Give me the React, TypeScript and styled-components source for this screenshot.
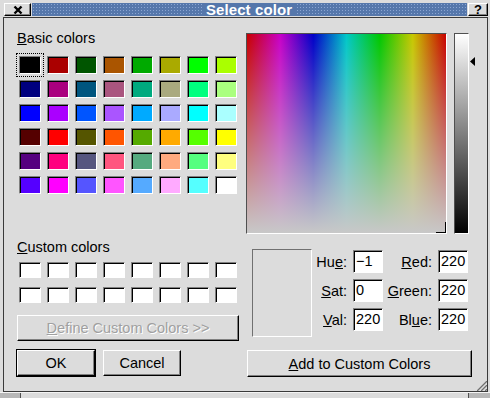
import React from 'react'
import styled, { createGlobalStyle, css } from 'styled-components'

const GlobalStyle = createGlobalStyle`
  html, body {
    margin: 0;
    padding: 0;
    background: #dcdcdc;
  }
  body {
    font-family: "Liberation Sans", Arial, sans-serif;
    font-size: 14.5px;
    color: #000;
  }
`

// Qt basic palette, row by row
const BASIC = [
  ['#000000', '#aa0000', '#005500', '#aa5500', '#00aa00', '#aaaa00', '#00ff00', '#aaff00'],
  ['#00007f', '#aa007f', '#00557f', '#aa557f', '#00aa7f', '#aaaa7f', '#00ff7f', '#aaff7f'],
  ['#0000ff', '#aa00ff', '#0055ff', '#aa55ff', '#00aaff', '#aaaaff', '#00ffff', '#aaffff'],
  ['#550000', '#ff0000', '#555500', '#ff5500', '#55aa00', '#ffaa00', '#55ff00', '#ffff00'],
  ['#55007f', '#ff007f', '#55557f', '#ff557f', '#55aa7f', '#ffaa7f', '#55ff7f', '#ffff7f'],
  ['#5500ff', '#ff00ff', '#5555ff', '#ff55ff', '#55aaff', '#ffaaff', '#55ffff', '#ffffff'],
]

const CUSTOM = Array.from({ length: 16 }, () => '#ffffff')

const sunken = css`
  box-sizing: border-box;
  border: 1px solid;
  border-color: #808080 #ffffff #ffffff #808080;
  box-shadow: inset 1px 1px 0 #000;
`

const raised = css`
  box-sizing: border-box;
  border: 1px solid;
  border-color: #ffffff #000 #000 #ffffff;
  box-shadow: inset -1px -1px 0 #808080;
  background: #dcdcdc;
`

const Window = styled.div`
  width: 490px;
  height: 398px;
  background: #dcdcdc;
  display: flex;
  flex-direction: column;
  overflow: hidden;
`

const TitleBar = styled.div`
  height: 17px;
  box-sizing: border-box;
  padding: 3px 2px 0 4px;
  display: flex;
  gap: 1px;
`

const TitleButton = styled.div<{ $w: number }>`
  ${raised}
  width: ${p => p.$w}px;
  height: 13px;
  display: flex;
  align-items: center;
  justify-content: center;
  font-weight: bold;
  font-size: 13px;
  line-height: 1;
`

const TitleStrip = styled.div`
  flex: 1;
  height: 13px;
  background-color: #5577ab;
  background-image: radial-gradient(circle, #8aa5d2 0.7px, transparent 0.9px);
  background-size: 3px 3px;
  display: flex;
  justify-content: center;
  align-items: center;
`

const TitleText = styled.span`
  background: #5577ab;
  color: #fff;
  font-weight: bold;
  font-size: 15px;
  line-height: 13px;
  padding: 0 5px 0 4px;
  height: 13px;
  letter-spacing: 0.1px;
`

const Client = styled.div`
  flex: 1;
  margin: 0 2px 0 3px;
  border: 1px solid #3a3a3a;
  position: relative;
  display: flex;
  gap: 6px;
  padding: 12px 0 0 12px;
`

const LeftColumn = styled.div`
  width: 224px;
  display: flex;
  flex-direction: column;
`

const RightColumn = styled.div`
  display: flex;
  flex-direction: column;
  padding-top: 3px;
`

const GroupLabel = styled.div<{ $top?: number }>`
  height: 17px;
  line-height: 17px;
  margin: ${p => p.$top ?? 0}px 0 0 1px;
`

const SwatchGrid = styled.div<{ $top: number; $rowGap: number }>`
  display: grid;
  grid-template-columns: repeat(8, 28px);
  grid-auto-rows: 24px;
  row-gap: ${p => p.$rowGap}px;
  margin-top: ${p => p.$top}px;
`

const Cell = styled.div<{ $focused?: boolean }>`
  box-sizing: border-box;
  padding-top: ${p => (p.$focused ? 2 : 3)}px;
  padding-left: ${p => (p.$focused ? 2 : 3)}px;
  border: ${p => (p.$focused ? '1px dotted #000' : 'none')};
`

const Swatch = styled.div<{ $h: number }>`
  ${sunken}
  width: 22px;
  height: ${p => p.$h}px;
`

const Button = styled.div<{ $w: number; $h?: number; $default?: boolean; $disabled?: boolean }>`
  ${raised}
  width: ${p => p.$w}px;
  height: ${p => p.$h ?? 26}px;
  display: flex;
  align-items: center;
  justify-content: center;
  color: ${p => (p.$disabled ? '#a0a0a0' : '#000')};
  text-shadow: ${p => (p.$disabled ? '1px 1px 0 #fff' : 'none')};
  outline: ${p => (p.$default ? '1px solid #000' : 'none')};
  white-space: nowrap;
`

const DefineButton = styled(Button)`
  margin: 7px 0 0 1px;
`

const ButtonRow = styled.div`
  display: flex;
  gap: 8px;
  margin: 9px 0 0 1px;
`

const PickerRow = styled.div`
  display: flex;
  align-items: flex-start;
`

const Picker = styled.div`
  box-sizing: border-box;
  width: 201px;
  height: 201px;
  border: 1px solid;
  border-color: #505050 #ffffff #ffffff #505050;
  position: relative;
  background:
    linear-gradient(to bottom, rgba(200, 200, 200, 0), rgba(200, 200, 200, 1)),
    linear-gradient(
      to right,
      #c80000 0%,
      #c800c8 16.67%,
      #0000c8 33.33%,
      #00c8c8 50%,
      #00c800 66.67%,
      #c8c800 83.33%,
      #c80000 100%
    );
`

const Crosshair = styled.div`
  position: absolute;
  right: 0;
  bottom: 0;
  width: 10px;
  height: 11px;
  box-sizing: border-box;
  border-right: 1px solid #000;
  border-bottom: 1px solid #000;
`

const Slider = styled.div`
  box-sizing: border-box;
  width: 15px;
  height: 201px;
  margin-left: 7px;
  border: 1px solid;
  border-color: #505050 #ffffff #ffffff #505050;
  background: linear-gradient(to bottom, #ffffff, #000000);
`

const Arrow = styled.svg`
  display: block;
  margin-left: 1px;
`

const EditRow = styled.div`
  display: flex;
  align-items: flex-start;
  margin: 15px 0 0 6px;
`

const Preview = styled.div<{ $color: string }>`
  box-sizing: border-box;
  width: 60px;
  height: 88px;
  border: 1px solid;
  border-color: #707070 #ffffff #ffffff #707070;
  background: ${p => p.$color};
`

const Fields = styled.div`
  display: grid;
  grid-template-columns: 41px 30px 55px 30px;
  grid-auto-rows: 23px;
  row-gap: 6px;
  margin-top: 1px;
  align-items: center;
`

const FieldLabel = styled.span`
  text-align: right;
  padding-right: 6px;
  white-space: nowrap;
`

const Field = styled.div`
  ${sunken}
  height: 23px;
  background: #fff;
  padding-left: 2px;
  line-height: 21px;
  overflow: hidden;
  white-space: nowrap;
`

const AddButton = styled(Button)`
  margin: 13px 0 0 1px;
`

const SizeGrip = styled.svg`
  position: absolute;
  right: 0;
  bottom: 0;
`

const BottomFrame = styled.div`
  height: 6px;
  display: flex;
  border-top: 1px solid #f4f4f4;
  box-sizing: border-box;
`

const Handle = styled.div<{ $w: number; $side: 'left' | 'right' }>`
  width: ${p => p.$w}px;
  background: #b8b8b8;
  ${p => (p.$side === 'left' ? 'border-right' : 'border-left')}: 1px solid #505050;
`

const Rest = styled.div`
  flex: 1;
  background: #dcdcdc;
`

const FIELDS = [
  { a: ['Hu', 'e', ':'], av: '−1', b: ['', 'R', 'ed:'], bv: '220' },
  { a: ['', 'S', 'at:'], av: '0', b: ['', 'G', 'reen:'], bv: '220' },
  { a: ['', 'V', 'al:'], av: '220', b: ['Bl', 'u', 'e:'], bv: '220' },
]

const Mnemonic = ({ parts }: { parts: string[] }) => (
  <>
    {parts[0]}
    <u>{parts[1]}</u>
    {parts[2]}
  </>
)

export default function App() {
  const val = 220
  const arrowTop = Math.round((1 - val / 255) * 199) - 3

  return (
    <>
      <GlobalStyle />
      <Window>
        <TitleBar>
          <TitleButton $w={27}>
            <svg width="10" height="10" viewBox="0 0 10 10">
              <path d="M1.5 1.5 L8.5 8.5 M8.5 1.5 L1.5 8.5" stroke="#000" strokeWidth="2.4" />
            </svg>
          </TitleButton>
          <TitleStrip>
            <TitleText>Select color</TitleText>
          </TitleStrip>
          <TitleButton $w={20}>?</TitleButton>
        </TitleBar>

        <Client>
          <LeftColumn>
            <GroupLabel>
              <u>B</u>asic colors
            </GroupLabel>
            <SwatchGrid $top={6} $rowGap={0}>
              {BASIC.flat().map((c, i) => (
                <Cell key={i} $focused={i === 0}>
                  <Swatch $h={18} style={{ background: c }} />
                </Cell>
              ))}
            </SwatchGrid>

            <GroupLabel $top={42}>
              <u>C</u>ustom colors
            </GroupLabel>
            <SwatchGrid $top={3} $rowGap={1}>
              {CUSTOM.map((c, i) => (
                <Cell key={i}>
                  <Swatch $h={16} style={{ background: c }} />
                </Cell>
              ))}
            </SwatchGrid>

            <DefineButton $w={222} $disabled>
              <span>
                <u>D</u>efine Custom Colors &gt;&gt;
              </span>
            </DefineButton>

            <ButtonRow>
              <Button $w={78} $default>OK</Button>
              <Button $w={78}>Cancel</Button>
            </ButtonRow>
          </LeftColumn>

          <RightColumn>
            <PickerRow>
              <Picker>
                <Crosshair />
              </Picker>
              <Slider />
              <Arrow width="6" height="9" viewBox="0 0 6 9" style={{ marginTop: arrowTop }}>
                <path d="M0 4.5 L5 0 L5 9 Z" fill="#000" />
              </Arrow>
            </PickerRow>

            <EditRow>
              <Preview $color="#dcdcdc" />
              <Fields>
                {FIELDS.map((f, i) => (
                  <React.Fragment key={i}>
                    <FieldLabel>
                      <Mnemonic parts={f.a} />
                    </FieldLabel>
                    <Field>{f.av}</Field>
                    <FieldLabel>
                      <Mnemonic parts={f.b} />
                    </FieldLabel>
                    <Field>{f.bv}</Field>
                  </React.Fragment>
                ))}
              </Fields>
            </EditRow>

            <AddButton $w={225} $h={27}>
              <span>
                <u>A</u>dd to Custom Colors
              </span>
            </AddButton>
          </RightColumn>

          <SizeGrip width="14" height="14" viewBox="0 0 14 14">
            {[0, 4, 8].map(o => (
              <g key={o}>
                <line x1={3 + o} y1="14" x2="14" y2={3 + o} stroke="#fff" strokeWidth="1" />
                <line x1={4 + o} y1="14" x2="14" y2={4 + o} stroke="#707070" strokeWidth="1.4" />
              </g>
            ))}
          </SizeGrip>
        </Client>

        <BottomFrame>
          <Handle $w={20} $side="left" />
          <Rest />
          <Handle $w={21} $side="right" />
        </BottomFrame>
      </Window>
    </>
  )
}
